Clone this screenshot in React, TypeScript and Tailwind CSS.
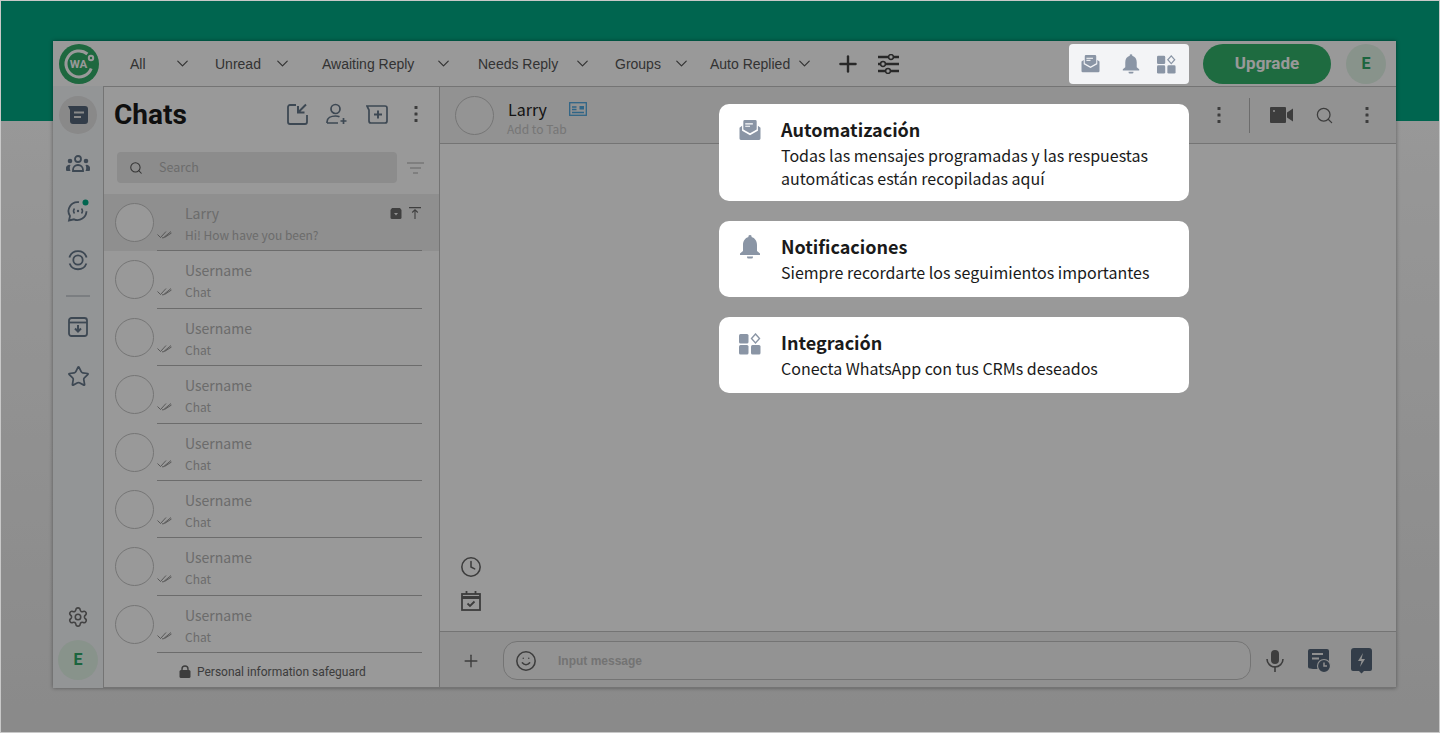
import React from 'react';
import { ChevronDown, Clock, Plus, Search, Settings, Smile, Star } from 'lucide-react';

const cjk = "font-['Noto_Sans_CJK_SC','Noto_Sans',sans-serif]";

const tabs = [
  { label: 'All', labelW: 'w-[45px]', tabW: 'w-[85px]' },
  { label: 'Unread', labelW: 'w-[60px]', tabW: 'w-[107px]' },
  { label: 'Awaiting Reply', labelW: 'w-[114px]', tabW: 'w-[156px]' },
  { label: 'Needs Reply', labelW: 'w-[97px]', tabW: 'w-[137px]' },
  { label: 'Groups', labelW: 'w-[59px]', tabW: 'w-[95px]' },
  { label: 'Auto Replied', labelW: 'w-[87px]', tabW: 'w-[128px]' },
];

const rows = [
  { name: 'Larry', text: 'Hi! How have you been?', active: true },
  ...Array.from({ length: 7 }, () => ({ name: 'Username', text: 'Chat', active: false })),
];

const cards = [
  {
    icon: 'mail',
    height: 'h-[97px]',
    title: 'Automatización',
    lines: ['Todas las mensajes programadas y las respuestas', 'automáticas están recopiladas aquí'],
  },
  { icon: 'bell', height: 'h-[76px]', title: 'Notificaciones', lines: ['Siempre recordarte los seguimientos importantes'] },
  { icon: 'apps', height: 'h-[76px]', title: 'Integración', lines: ['Conecta WhatsApp con tus CRMs deseados'] },
];

const Logo = () => (
  <svg width="40" height="40" viewBox="0 0 40 40">
    <circle cx="20" cy="20" r="20" fill="#33ad69" />
    <path d="M28.400 10A13 13 0 1 0 32.200 24.400" fill="none" stroke="#fff" strokeWidth="3" />
    <circle cx="32" cy="14" r="3.200" fill="#fff" />
    <circle cx="32" cy="14" r="1.200" fill="#33ad69" />
    <text x="19.500" y="24" textAnchor="middle" fontSize="11.500" fontWeight="700" fill="#fff" fontFamily="Roboto, sans-serif">
      WA
    </text>
  </svg>
);

const MailIcon = ({ className }: { className: string }) => (
  <svg viewBox="0 0 22 22" className={className} fill="currentColor">
    <path d="M4 1.500a1.500 1.500 0 0 1 1.500-1.500h11a1.500 1.500 0 0 1 1.500 1.500V10l-7 4-7-4z" />
    <path d="M0 8l2.700-2v5.200L11 16l8.300-4.800V6L22 8v11.500A1.500 1.500 0 0 1 20.500 21h-19A1.500 1.500 0 0 1 0 19.500z" />
    <path d="M6 4h8M6 6.500h5" stroke="#fff" strokeWidth="1.200" />
  </svg>
);

const BellIcon = ({ className }: { className: string }) => (
  <svg viewBox="0 0 22 24" className={className} fill="currentColor">
    <path d="M11 0a1.500 1.500 0 0 1 1.500 2C16 3 18 6 18 10v6l3 2.500V20H1v-1.500L4 16v-6c0-4 2-7 5.500-8A1.500 1.500 0 0 1 11 0z" />
    <path d="M8 21.500h6V22a1.500 1.500 0 0 1-1.500 1.500h-3A1.500 1.500 0 0 1 8 22z" />
  </svg>
);

const AppsIcon = ({ className }: { className: string }) => (
  <svg viewBox="0 0 22 22" className={className} fill="currentColor">
    <rect x="0" y="1" width="9.500" height="9.500" rx="1.500" />
    <rect x="0" y="12" width="9.500" height="9.500" rx="1.500" />
    <rect x="12" y="12" width="9.500" height="9.500" rx="1.500" />
    <path d="M16.500 1l4 4.500-4 4.500-4-4.500z" fill="none" stroke="currentColor" strokeWidth="1.400" />
  </svg>
);

const Dots = () => (
  <svg width="4" height="18" viewBox="0 0 4 18" fill="#666">
    <rect x="0.500" y="1" width="3" height="3" rx="0.500" />
    <rect x="0.500" y="7.500" width="3" height="3" rx="0.500" />
    <rect x="0.500" y="14" width="3" height="3" rx="0.500" />
  </svg>
);

const Ticks = () => (
  <svg width="15" height="9" viewBox="0 0 15 9" fill="none" stroke="#7a7a7a" strokeWidth="0.800" className="shrink-0 -mt-[2px]">
    <path d="M0.500 4.500l3 3L9 1.500M5 7.500l1 .6L14 1.500M7.500 7.500L14.500 3" />
  </svg>
);

const SideNav = () => (
  <div className="w-[50px] shrink-0 bg-[#f6f8fb] flex flex-col items-center pt-[10px] pb-[8px]">
    <div className="w-[38px] h-[38px] rounded-full bg-[#e4e4e4] flex items-center justify-center">
      <svg width="20" height="18" viewBox="0 0 20 18">
        <path d="M0 0h17a3 3 0 0 1 3 3v12a3 3 0 0 1-3 3H5a3 3 0 0 1-3-3V4z" fill="#55677a" />
        <path d="M6 6.500h10M6 11h7" stroke="#e4e4e4" strokeWidth="1.800" />
      </svg>
    </div>
    <svg width="24" height="18" viewBox="0 0 24 18" fill="#66788a" className="mt-[21px]">
      <circle cx="12" cy="4" r="3" fill="none" stroke="#66788a" strokeWidth="1.800" />
      <circle cx="4" cy="6" r="2.300" />
      <circle cx="20" cy="6" r="2.300" />
      <path d="M7 15a5 5 0 0 1 10 0v1H7z" fill="none" stroke="#66788a" strokeWidth="1.800" />
      <path d="M0 14a3.500 3.500 0 0 1 4.500-4A7 7 0 0 0 4.500 16H1a1 1 0 0 1-1-1zM24 14a3.500 3.500 0 0 0-4.500-4 7 7 0 0 1 0 6H23a1 1 0 0 0 1-1z" />
    </svg>
    <svg width="24" height="24" viewBox="0 0 24 24" className="mt-[26px]">
      <path d="M13 3.200A9 9 0 0 0 4 17l-1 4.500 5-1.200a9 9 0 0 0 12.500-8" fill="none" stroke="#66788a" strokeWidth="1.800" />
      <path d="M8.500 9.500a4 4 0 0 0 0 5M15.500 9.500a4 4 0 0 1 0 5" fill="none" stroke="#66788a" strokeWidth="1.500" />
      <circle cx="12" cy="12" r="1.200" fill="#66788a" />
      <circle cx="19.500" cy="3.500" r="3" fill="#00a884" />
    </svg>
    <svg width="22" height="22" viewBox="0 0 22 22" fill="none" stroke="#66788a" strokeWidth="1.800" className="mt-[26px]">
      <circle cx="11" cy="11" r="4.700" />
      <path d="M2.400 8.500A9 9 0 0 1 19.600 8.500M2.600 14.500a9 9 0 0 0 16.800 0" />
    </svg>
    <div className="w-[24px] h-[2px] bg-[#cdd2d7] mt-[24px]" />
    <svg width="20" height="20" viewBox="0 0 20 20" fill="none" stroke="#66788a" strokeWidth="1.800" className="mt-[20px]">
      <rect x="1" y="1" width="18" height="18" rx="2.500" />
      <path d="M1 5.500h18" />
      <path d="M10 8v6M7 11.500l3 3 3-3" strokeWidth="2" />
    </svg>
    <Star size={23} strokeWidth={1.800} className="text-[#66788a] mt-[28px]" />
    <div className="flex-1" />
    <Settings size={22} strokeWidth={1.700} className="text-[#6e6e6e] mb-[12px]" />
    <div className="w-[40px] h-[40px] rounded-full bg-[#e3f5e8] flex items-center justify-center text-[#30a868] text-[16px] font-bold font-['Roboto',sans-serif]">
      E
    </div>
  </div>
);

const ChatList = () => (
  <div className="w-[336px] shrink-0 bg-white border-l border-t border-b border-[#c2c2c2] flex flex-col">
    <div className="h-[56px] shrink-0 flex items-center pl-[10px] pr-[20px] pb-[2px]">
      <span className="font-['Roboto',sans-serif] text-[28px] font-bold text-[#1a1a1a] leading-none mt-[2px]">Chats</span>
      <div className="flex-1" />
      <svg width="22" height="22" viewBox="0 0 22 22" fill="none" stroke="#66788a" strokeWidth="1.800">
        <path d="M9 2H3a2 2 0 0 0-2 2v15a2 2 0 0 0 2 2h15a2 2 0 0 0 2-2v-7" />
        <path d="M19 1.500l-7.500 7.500M11 3v6.500h6.500" strokeWidth="2" />
      </svg>
      <svg width="22" height="22" viewBox="0 0 22 22" fill="none" stroke="#66788a" strokeWidth="1.700" className="ml-[17px]">
        <circle cx="9.500" cy="6" r="4.500" />
        <path d="M1 20v-1c0-4 4-6 8.500-6 1.500 0 3 .3 4 .8M1 20h11" />
        <path d="M17.500 15v6M14.500 18h6" />
      </svg>
      <svg width="22" height="19" viewBox="0 0 22 19" fill="none" stroke="#66788a" strokeWidth="1.700" className="ml-[18px]">
        <path d="M1 1h18a2 2 0 0 1 2 2v13a2 2 0 0 1-2 2H5a2 2 0 0 1-2-2V5z" />
        <path d="M12 5.500v8M8 9.500h8" strokeWidth="1.900" />
      </svg>
      <div className="ml-[26px] mr-[1px]">
        <Dots />
      </div>
    </div>
    <div className="h-[31px] shrink-0 flex items-center mt-[9px] ml-[13px]">
      <div className="w-[280px] h-[31px] rounded-[4px] bg-[#e9e9e9] flex items-center pl-[12px]">
        <Search size={14} strokeWidth={1.800} className="text-[#555]" />
        <span className={`${cjk} ml-[16px] text-[12.5px] text-[#b5b5b5]`}>Search</span>
      </div>
      <svg width="17" height="12" viewBox="0 0 17 12" fill="none" stroke="#c6c6c6" strokeWidth="1.400" className="ml-[10px]">
        <path d="M0 1h17M3 6h11M6 11h5" />
      </svg>
    </div>
    <div className="mt-[11px] flex-1 flex flex-col">
      {rows.map((row, i) => (
        <div key={i} className={`h-[57.4px] shrink-0 flex pl-[11px] ${row.active ? 'bg-[#eeeeee]' : ''}`}>
          <div className="w-[39px] h-[39px] mt-[9px] rounded-full border border-[#c4c4c4] bg-white shrink-0" />
          <div className="flex-1 ml-[3px] mr-[17px] border-b border-[#b5b5b5] relative">
            <div className={`${cjk} ml-[28px] mt-[9px] text-[14px] leading-[20px] text-[#b4b4b4]`}>{row.name}</div>
            <div className="flex items-center mt-[3px]">
              <Ticks />
              <span className={`${cjk} ml-[13px] text-[12px] leading-[18px] text-[#b4b4b4]`}>{row.text}</span>
            </div>
            {row.active && (
              <div className="absolute right-[1px] top-[13px] flex items-center gap-[7px]">
                <svg width="12" height="11" viewBox="0 0 11 11">
                  <path d="M1.500 0h8L11 2v7.500A1.500 1.500 0 0 1 9.500 11h-8A1.500 1.500 0 0 1 0 9.500V2z" fill="#6a6a6a" />
                  <path d="M3.500 5h4L5.500 7.500z" fill="#eee" />
                </svg>
                <svg width="12" height="12" viewBox="0 0 12 12" fill="none" stroke="#6a6a6a" strokeWidth="1.100">
                  <path d="M0 .6h12M6 12V3M3.200 5.500L6 2.800l2.800 2.700" />
                </svg>
              </div>
            )}
          </div>
        </div>
      ))}
      <div className="flex-1 flex items-center pl-[75px] pt-[3px] font-['Roboto',sans-serif] text-[12px] text-[#666]">
        <svg width="12" height="13" viewBox="0 0 12 13" className="mr-[6px]">
          <rect x="0.500" y="5" width="11" height="8" rx="1.500" fill="#666" />
          <path d="M3 5.500V4a3 3 0 0 1 6 0v1.500" fill="none" stroke="#666" strokeWidth="1.400" />
        </svg>
        <span>Personal information safeguard</span>
      </div>
    </div>
  </div>
);

const ChatMain = () => (
  <div className="flex-1 min-w-0 bg-white border-l border-[#c2c2c2] flex flex-col">
    <div className="h-[58px] shrink-0 bg-[#f3f3f3] border-t border-b border-[#c2c2c2] flex items-center pl-[15px] pr-[27px]">
      <div className="w-[39px] h-[39px] rounded-full border border-[#c4c4c4] bg-[#f7f7f7]" />
      <div className="ml-[14px] mt-[4px]">
        <div className="flex items-center">
          <span className={`${cjk} text-[16px] leading-[22px] text-[#222]`}>Larry</span>
          <svg width="18" height="14" viewBox="0 0 18 14" fill="none" stroke="#4fa8e0" strokeWidth="1.300" className="ml-[22px]">
            <rect x="0.700" y="0.700" width="16.600" height="12.600" />
            <path d="M3 5h4.500M3 7.500h4.500M3 10.500h12" />
            <rect x="10.500" y="4" width="4.500" height="3.500" fill="#4fa8e0" stroke="none" />
          </svg>
        </div>
        <div className={`${cjk} text-[12px] leading-[16px] mt-[1px] text-[#c5c5c5] -ml-[1px]`}>Add to Tab</div>
      </div>
      <div className="flex-1" />
      <Dots />
      <div className="w-px h-[35px] bg-[#b5b5b5] ml-[28px]" />
      <svg width="23" height="16" viewBox="0 0 23 16" fill="#666" className="ml-[20px]">
        <path d="M1 0h14a1 1 0 0 1 1 1v14a1 1 0 0 1-1 1H1a1 1 0 0 1-1-1V1a1 1 0 0 1 1-1zM17 5.500l6-4v13l-6-4z" />
        <circle cx="4" cy="4" r="1" fill="#f3f3f3" />
      </svg>
      <Search size={19} strokeWidth={1.600} className="text-[#666] ml-[22px]" />
      <div className="ml-[31px]">
        <Dots />
      </div>
    </div>
    <div className="flex-1 flex flex-col justify-end pl-[20px] pb-[20px] gap-[13px]">
      <Clock size={22} strokeWidth={1.700} className="text-[#666]" />
      <svg width="20" height="20" viewBox="0 0 20 20" fill="none" stroke="#666" strokeWidth="1.800" className="ml-[1px]">
        <rect x="1" y="3" width="18" height="16" />
        <path d="M1 6.500h18" strokeWidth="3" />
        <path d="M5.500 0v3M14.500 0v3" />
        <path d="M6.500 12.500l2.500 2.500 4.500-4.500" />
      </svg>
    </div>
    <div className="h-[57px] shrink-0 bg-[#f1f1f1] border-t border-b border-[#c2c2c2] flex items-center pl-[21px] pr-[24px] pt-[2px]">
      <Plus size={20} strokeWidth={1.700} className="text-[#666] shrink-0" />
      <div className="ml-[22px] w-[748px] shrink-0 h-[39px] rounded-[14px] border border-[#c2c2c2] bg-[#f6f6f6] flex items-center pl-[11px]">
        <Smile size={22} strokeWidth={1.700} className="text-[#666]" />
        <span className="ml-[21px] text-[12px] font-['Liberation_Sans',sans-serif] font-bold text-[#c0c0c0]">Input message</span>
      </div>
      <svg width="18" height="22" viewBox="0 0 18 22" className="ml-[15px] shrink-0" fill="#666">
        <rect x="5" y="0" width="8" height="14" rx="4" />
        <path d="M1 9a8 8 0 0 0 16 0" fill="none" stroke="#666" strokeWidth="1.600" />
        <path d="M9 16v6" stroke="#666" strokeWidth="1.600" />
      </svg>
      <svg width="23" height="24" viewBox="0 0 23 24" className="ml-[24px] shrink-0">
        <path d="M2 0h17a2 2 0 0 1 2 2v16a2 2 0 0 1-2 2H5l-3-.5A2 2 0 0 1 0 18V2a2 2 0 0 1 2-2z" fill="#55677a" />
        <path d="M4 5h11M4 9.500h7" stroke="#f1f1f1" strokeWidth="1.800" />
        <circle cx="16" cy="17" r="6.500" fill="#55677a" stroke="#f1f1f1" strokeWidth="1.200" />
        <path d="M16 13.500V17h3" fill="none" stroke="#f1f1f1" strokeWidth="1.500" />
      </svg>
      <svg width="21" height="26" viewBox="0 0 21 26" className="ml-[20px] shrink-0">
        <path d="M3 0h15a3 3 0 0 1 3 3v18a2 2 0 0 1-2 2h-6l-2.500 2.500L8 23H2a2 2 0 0 1-2-2V3a3 3 0 0 1 3-3z" fill="#55677a" />
        <path d="M12 5l-5 8h3.500L9 19l5-8h-3.500z" fill="#f1f1f1" />
      </svg>
    </div>
  </div>
);

export default function App() {
  return (
    <div className="relative w-[1440px] h-[733px] overflow-hidden border border-[#c8c8c8] bg-[linear-gradient(#00a884_120px,#fdfdfd_120px,#e6e6e6_100%)] pt-[40px] pl-[52px]">
      <div className="w-[1343px] h-[647px] bg-white flex flex-col shadow-[0_0_4px_rgba(0,0,0,0.4)]">
        <div className="h-[45px] shrink-0 flex items-center pl-[6px] pr-[10px] font-['Liberation_Sans',sans-serif] text-[14px] text-[#555]">
          <Logo />
          <div className="flex items-center ml-[31px]">
            {tabs.map((tab) => (
              <div key={tab.label} className={`flex items-center ${tab.tabW}`}>
                <span className={`${tab.labelW} pt-[1px]`}>{tab.label}</span>
                <ChevronDown size={19} strokeWidth={1.500} className="-ml-[2px] -mr-[4px]" />
              </div>
            ))}
          </div>
          <Plus size={26} strokeWidth={2.200} className="-ml-[3px] text-[#444]" />
          <svg width="21" height="20" viewBox="0 0 21 20" fill="none" stroke="#444" strokeWidth="2.300" className="ml-[17px]">
            <path d="M0 3h21M0 10h21M0 17h21" />
            <circle cx="13" cy="3" r="2.400" fill="#fff" strokeWidth="1.500" />
            <circle cx="5" cy="10" r="2.400" fill="#fff" strokeWidth="1.500" />
            <circle cx="10" cy="17" r="2.400" fill="#fff" strokeWidth="1.500" />
          </svg>
          <div className="flex-1" />
          <div className="w-[128px] h-[40px] rounded-[20px] bg-[#32b26b] flex items-center justify-center text-white text-[17px] font-bold font-['Roboto',sans-serif]">
            Upgrade
          </div>
          <div className="ml-[15px] w-[40px] h-[40px] rounded-full bg-[#e3f5e8] flex items-center justify-center text-[#30a868] text-[16px] font-bold font-['Roboto',sans-serif]">
            E
          </div>
        </div>
        <div className="flex-1 min-h-0 flex">
          <SideNav />
          <ChatList />
          <ChatMain />
        </div>
      </div>

      {/* dim layer with the guide on top of it */}
      <div className="absolute inset-0 z-10 bg-black/40" />
      <div className="absolute z-20 left-[1068px] top-[43px] w-[120px] h-[40px] rounded-[4px] bg-[#f3f4f6] flex items-center text-[#8a95a5]">
        <MailIcon className="w-[19px] h-[18px] ml-[12px]" />
        <BellIcon className="w-[18px] h-[20px] ml-[22px]" />
        <AppsIcon className="w-[19px] h-[19px] ml-[17px]" />
      </div>
      <div className={`absolute z-20 left-[718px] top-[103px] w-[470px] flex flex-col gap-[20px] ${cjk}`}>
        {cards.map((card) => (
          <div key={card.title} className={`bg-white rounded-[10px] flex pl-[20px] pt-[12px] text-[#1a1a1a] ${card.height}`}>
            <div className="w-[22px] shrink-0 text-[#8a95a5]">
              {card.icon === 'mail' && <MailIcon className="w-[22px] h-[21px] mt-[4px]" />}
              {card.icon === 'bell' && <BellIcon className="w-[22px] h-[24px] mt-[2px]" />}
              {card.icon === 'apps' && <AppsIcon className="w-[22px] h-[22px] mt-[4px]" />}
            </div>
            <div className="ml-[20px]">
              <div className="text-[18px] font-semibold leading-[26px] mb-[2px]">{card.title}</div>
              {card.lines.map((line) => (
                <div key={line} className="text-[16px] leading-[23px]">
                  {line}
                </div>
              ))}
            </div>
          </div>
        ))}
      </div>
    </div>
  );
}
